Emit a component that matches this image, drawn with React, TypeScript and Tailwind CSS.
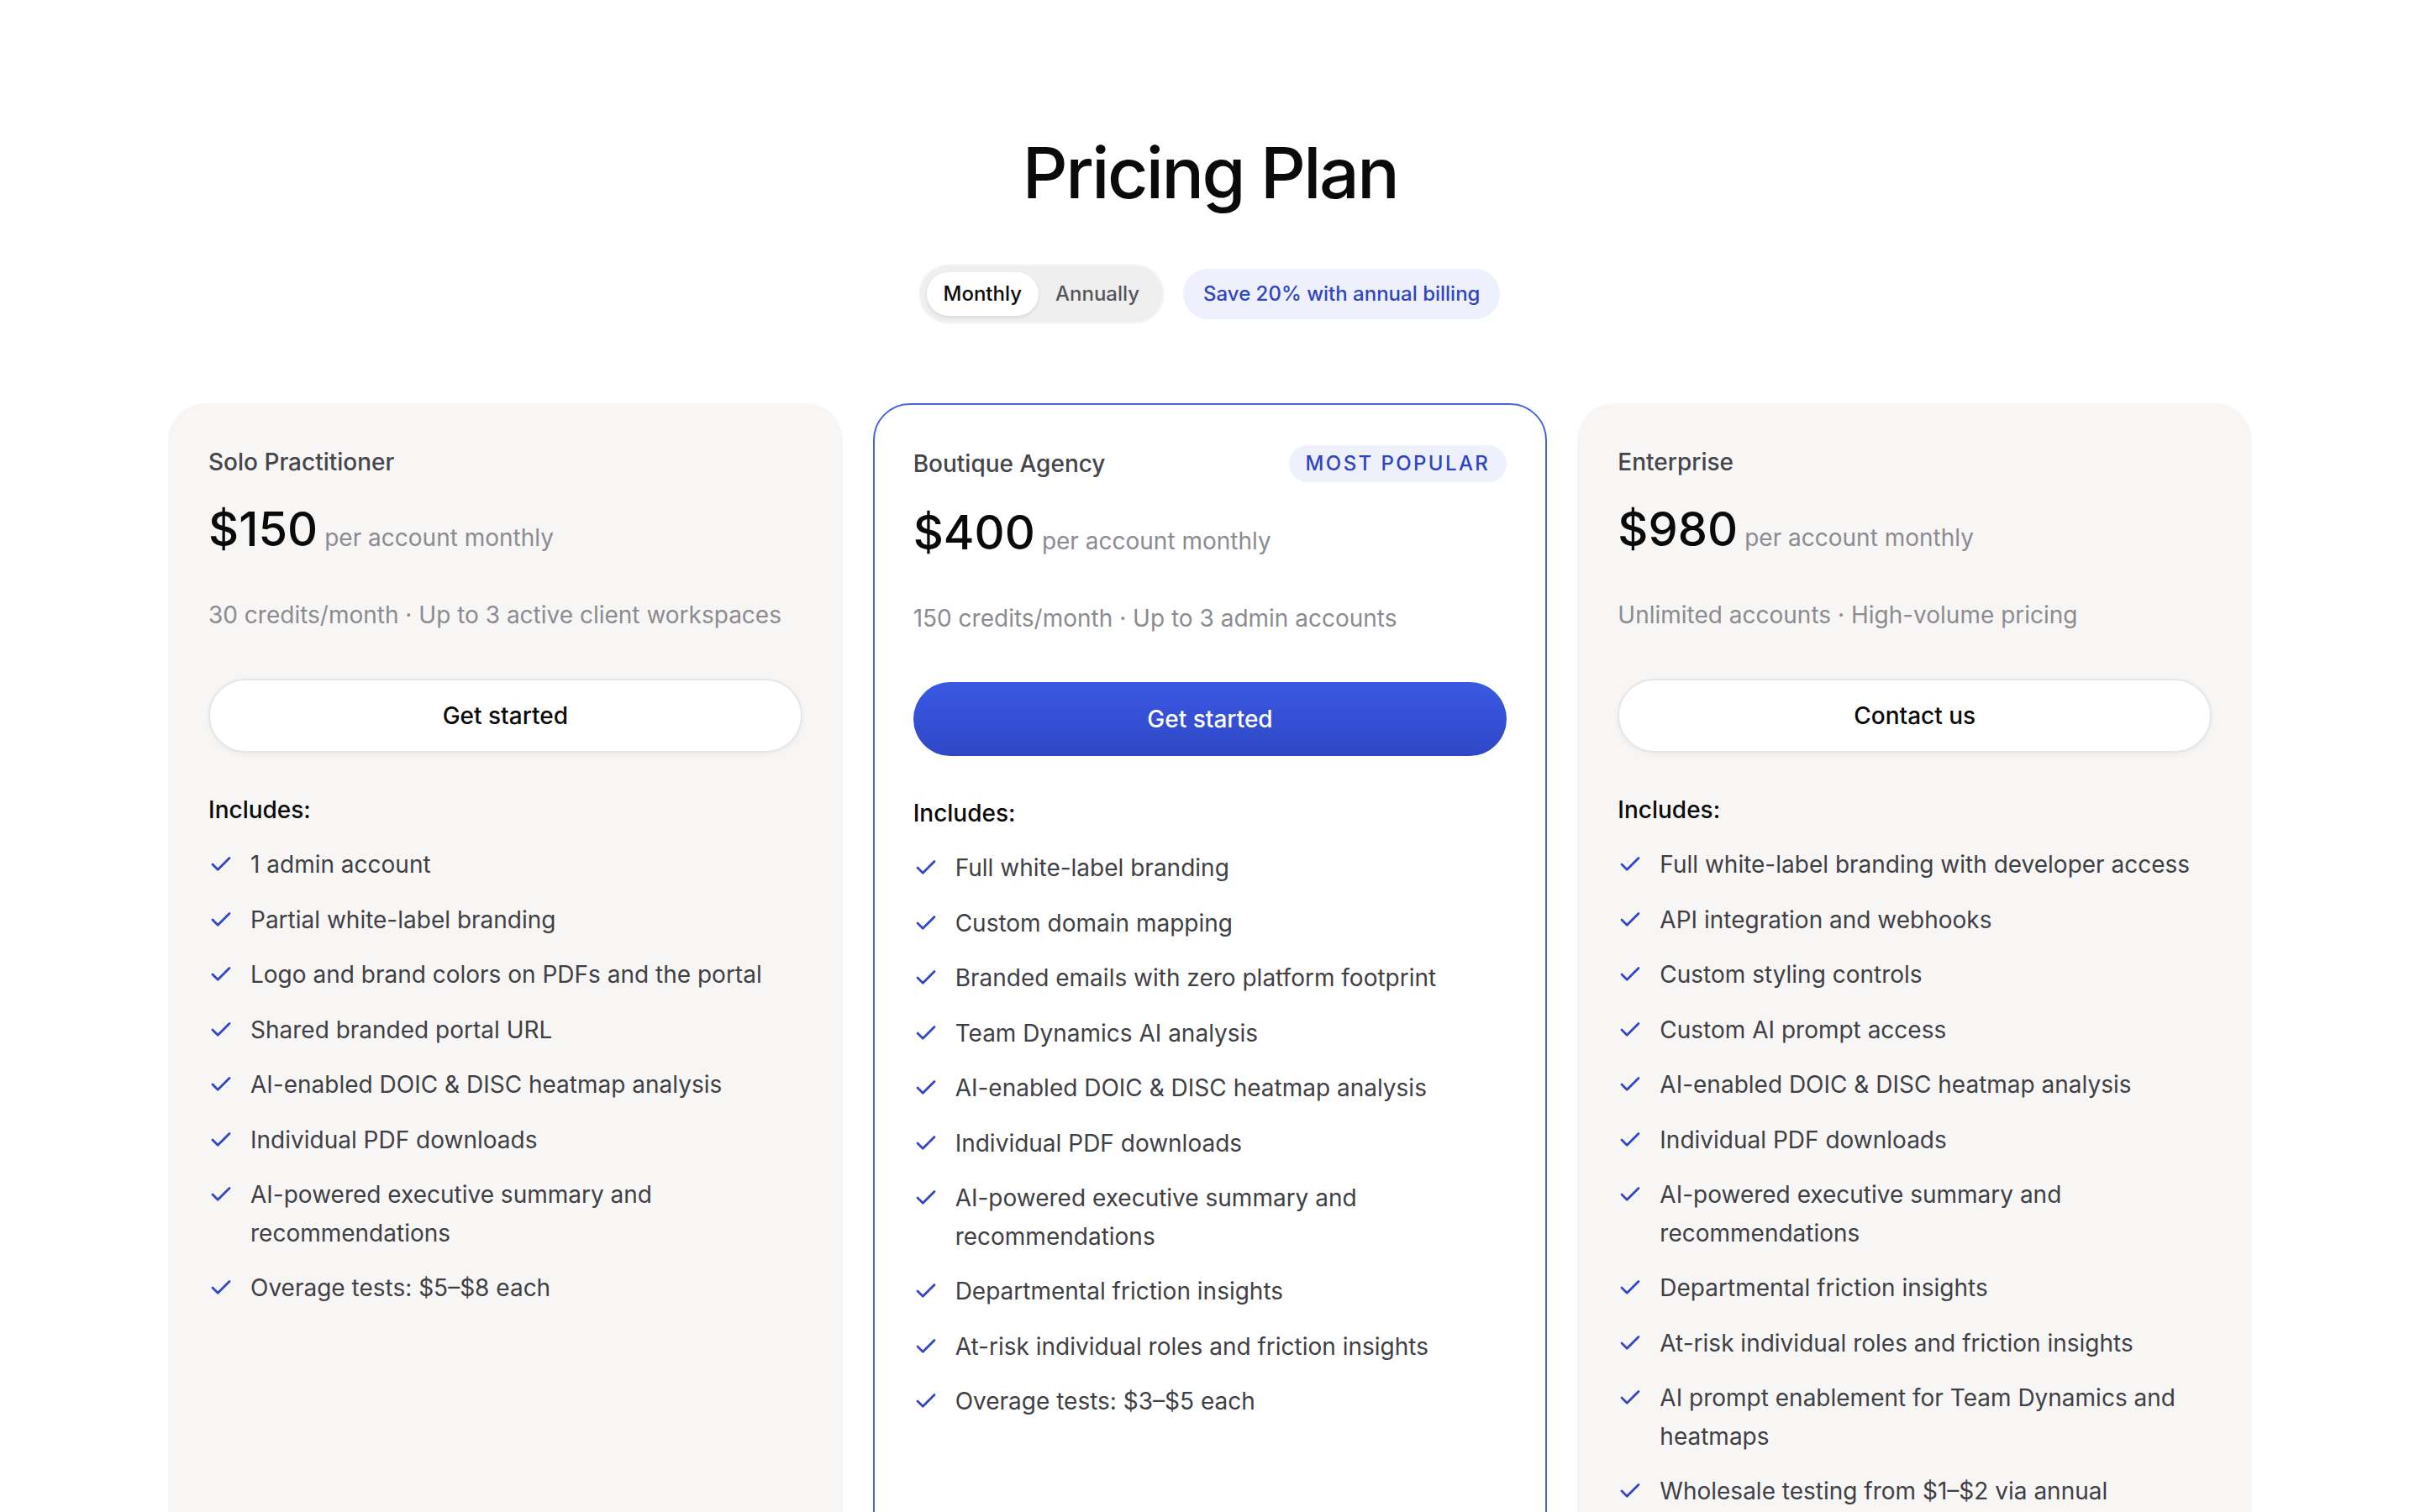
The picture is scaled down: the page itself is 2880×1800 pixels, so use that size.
import { Check } from "lucide-react";

type Plan = {
  name: string;
  price: string;
  summary: string;
  cta: string;
  popular?: boolean;
  features: string[];
};

const PLANS: Plan[] = [
  {
    name: "Solo Practitioner",
    price: "$150",
    summary: "30 credits/month · Up to 3 active client workspaces",
    cta: "Get started",
    features: [
      "1 admin account",
      "Partial white-label branding",
      "Logo and brand colors on PDFs and the portal",
      "Shared branded portal URL",
      "AI-enabled DOIC & DISC heatmap analysis",
      "Individual PDF downloads",
      "AI-powered executive summary and recommendations",
      "Overage tests: $5–$8 each",
    ],
  },
  {
    name: "Boutique Agency",
    price: "$400",
    summary: "150 credits/month · Up to 3 admin accounts",
    cta: "Get started",
    popular: true,
    features: [
      "Full white-label branding",
      "Custom domain mapping",
      "Branded emails with zero platform footprint",
      "Team Dynamics AI analysis",
      "AI-enabled DOIC & DISC heatmap analysis",
      "Individual PDF downloads",
      "AI-powered executive summary and recommendations",
      "Departmental friction insights",
      "At-risk individual roles and friction insights",
      "Overage tests: $3–$5 each",
    ],
  },
  {
    name: "Enterprise",
    price: "$980",
    summary: "Unlimited accounts · High-volume pricing",
    cta: "Contact us",
    features: [
      "Full white-label branding with developer access",
      "API integration and webhooks",
      "Custom styling controls",
      "Custom AI prompt access",
      "AI-enabled DOIC & DISC heatmap analysis",
      "Individual PDF downloads",
      "AI-powered executive summary and recommendations",
      "Departmental friction insights",
      "At-risk individual roles and friction insights",
      "AI prompt enablement for Team Dynamics and heatmaps",
      "Wholesale testing from $1–$2 via annual commitment",
    ],
  },
];

function PlanCard({ plan }: { plan: Plan }) {
  const hi = plan.popular;
  return (
    <div
      className={
        hi
          ? "flex flex-col rounded-[44px] border-2 border-[#4a63dc] bg-white px-[46px] py-12"
          : "flex flex-col rounded-[44px] border-2 border-transparent bg-[#f7f6f5] px-[46px] py-12"
      }
    >
      {/* ── Header ── */}
      <div className="flex items-center justify-between">
        <span className="text-[28px] font-medium leading-10 text-[#45454c]">{plan.name}</span>
        {hi && (
          <span className="rounded-full bg-[#eef0fc] px-5 py-1.5 text-[24px] font-medium leading-8 tracking-[0.1em] text-[#2f45c2]">
            MOST POPULAR
          </span>
        )}
      </div>

      {/* ── Price ── */}
      <div className="mt-6 flex items-baseline gap-2">
        <span className="text-[56px] font-medium leading-[72px] text-[#0a0a0a]">{plan.price}</span>
        <span className="text-[28px] text-[#8b8b92]">per account monthly</span>
      </div>

      <p className="mt-11 text-[28px] leading-relaxed text-[#8b8b92]">{plan.summary}</p>

      {/* ── CTA ── */}
      {hi ? (
        <button className="mt-[52px] h-[88px] w-full rounded-full bg-gradient-to-b from-[#3a59e3] to-[#2f47c6] text-[28px] font-medium text-white">
          {plan.cta}
        </button>
      ) : (
        <button className="mt-[52px] h-[88px] w-full rounded-full border-2 border-[#e6e6e6] bg-white text-[28px] font-medium text-[#0a0a0a] shadow-[0_2px_6px_rgba(0,0,0,0.05)]">
          {plan.cta}
        </button>
      )}

      {/* ── Features ── */}
      <p className="mt-[46px] text-[28px] font-medium leading-relaxed text-[#0a0a0a]">Includes:</p>
      <ul className="mt-5 flex flex-col gap-5">
        {plan.features.map((f) => (
          <li key={f} className="flex items-start gap-4 text-[28px] leading-relaxed text-[#3f3f46]">
            <Check size={30} strokeWidth={2.25} className="mt-[7px] shrink-0 text-[#3347c7]" />
            <span className="pl-1">{f}</span>
          </li>
        ))}
      </ul>
    </div>
  );
}

export default function App() {
  return (
    <div className="min-h-screen bg-white font-['Inter',sans-serif] text-[#0a0a0a] antialiased">
      <div className="mx-auto flex max-w-[2480px] flex-col items-center pb-32 pt-[164px]">
        <h1 className="text-[84px] font-medium leading-none tracking-[-0.03em]">Pricing Plan</h1>

        {/* ── Billing toggle ── */}
        <div className="mt-[68px] flex items-center gap-6">
          <div className="flex items-center rounded-full bg-[#efefef] p-2 ring-2 ring-black/[0.03]">
            <button className="h-[52px] rounded-full bg-white px-5 text-[24px] font-medium text-[#0a0a0a] shadow-[0_2px_4px_rgba(0,0,0,0.1)]">
              Monthly
            </button>
            <button className="h-[52px] rounded-full px-5 text-[24px] font-medium text-[#55555c]">
              Annually
            </button>
          </div>
          <span className="rounded-full bg-[#eef1fd] px-6 py-3 text-[24px] font-medium leading-9 text-[#2f45c2]">
            Save 20% with annual billing
          </span>
        </div>

        {/* ── Plans ── */}
        <div className="mt-24 grid w-full grid-cols-3 gap-9">
          {PLANS.map((p) => (
            <PlanCard key={p.name} plan={p} />
          ))}
        </div>
      </div>
    </div>
  );
}
